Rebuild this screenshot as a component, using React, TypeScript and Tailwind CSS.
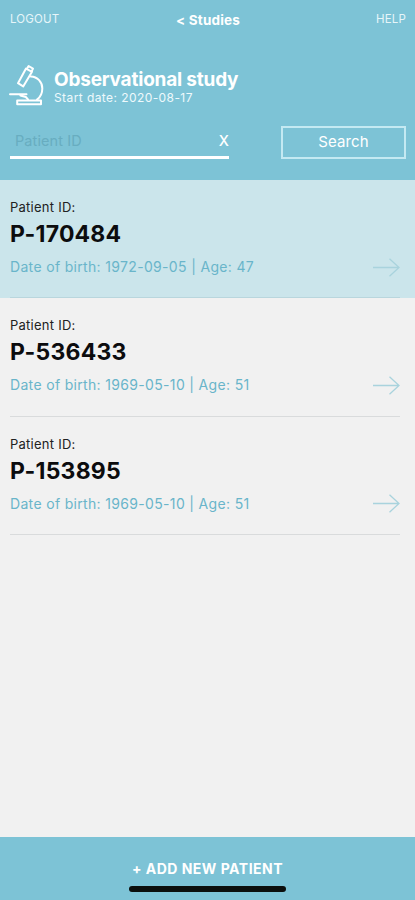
import { useState } from "react";
import clsx from "clsx";

type Patient = {
  id: string;
  birth: string;
  age: number;
};

const patients: Patient[] = [
  { id: "P-170484", birth: "1972-09-05", age: 47 },
  { id: "P-536433", birth: "1969-05-10", age: 51 },
  { id: "P-153895", birth: "1969-05-10", age: 51 },
];

function MicroscopeIcon() {
  return (
    <svg
      width="36"
      height="42"
      viewBox="0 0 36 42"
      fill="none"
      stroke="currentColor"
      strokeWidth="2"
      strokeLinecap="round"
      strokeLinejoin="round"
    >
      {/* tube */}
      <path d="M17 4.6 9 19.2 14.2 22.4 23 7.8Z" />
      <path d="M18.2 4.2 19.6 2 24 4.6 22.8 7" />
      {/* arm */}
      <path d="M21.8 12.6C28.5 12.8 33.3 18 33.3 24.4C33.3 29 31.4 33 28 35.6" />
      {/* stage */}
      <path d="M1 30.2H17.5M11.4 31.6 16.8 33 19 35.4" />
      {/* base */}
      <path d="M8.2 36.6H32V40.2H8.2Z" />
    </svg>
  );
}

function ArrowIcon() {
  return (
    <svg width="27" height="19" viewBox="0 0 27 19" fill="none" stroke="currentColor" strokeWidth="1.3">
      <path d="M0 9.5H26M16.5 0.8 26 9.5 16.5 18.2" />
    </svg>
  );
}

function PatientRow({
  patient,
  selected,
  onSelect,
}: {
  patient: Patient;
  selected: boolean;
  onSelect: () => void;
}) {
  return (
    <li onClick={onSelect} className={clsx("h-[118.3px] pl-2.5 pr-[15px]", selected && "bg-[#cbe5eb]")}>
      <div
        className={clsx(
          "flex h-full flex-col border-b pt-[18px]",
          selected ? "border-[#b9d6dd]" : "border-[#d9dbdc]"
        )}
      >
        <p className="text-[13px] leading-[18px] tracking-[0.25px] text-[#222]">Patient ID:</p>
        <p className="mt-1 text-[23px] font-bold leading-[28px] tracking-[0.2px] text-[#0c0c0e]">{patient.id}</p>
        <div className="mt-[9px] flex h-5 items-center justify-between">
          <span className="text-[14px] leading-5 tracking-[0.33px] text-[#69b5ca]">
            Date of birth: {patient.birth} | Age: {patient.age}
          </span>
          <span className="text-[#a9d3dd]">
            <ArrowIcon />
          </span>
        </div>
      </div>
    </li>
  );
}

export default function App() {
  const [query, setQuery] = useState("");
  const [selected, setSelected] = useState("P-170484");

  return (
    <div className="flex h-[900px] w-[415px] flex-col overflow-hidden bg-[#f1f1f1] font-['Inter',sans-serif]">
      <header className="h-[180px] shrink-0 bg-[#7dc3d6] text-white">
        <nav className="grid h-10 grid-cols-3 items-center pl-2.5 pr-[9px]">
          <button className="text-left text-[11.5px] tracking-[0.15px] text-[#e6f5f9]">LOGOUT</button>
          <button className="text-center text-[13.5px] font-bold tracking-[0.2px]">&lt; Studies</button>
          <button className="text-right text-[11.5px] tracking-[0.15px] text-[#e6f5f9]">HELP</button>
        </nav>

        <div className="mt-6 flex h-[42px] gap-[9px] pl-[9px]">
          <MicroscopeIcon />
          <div className="pt-[4px]">
            <h1 className="text-[19px] font-bold leading-[23px] tracking-[-0.2px]">Observational study</h1>
            <p className="text-[12px] leading-[14px] tracking-[0.42px] text-[#eef9fc]">Start date: 2020-08-17</p>
          </div>
        </div>

        <div className="mt-5 flex items-start justify-between pl-2.5 pr-[9px]">
          <div className="flex h-[33px] w-[219px] items-center border-b-[3px] border-white pl-[5px]">
            <input
              value={query}
              onChange={(e) => setQuery(e.target.value)}
              placeholder="Patient ID"
              className="w-0 flex-1 bg-transparent text-[14.5px] tracking-[0.1px] outline-none placeholder:text-[#68adc0]"
            />
            <button onClick={() => setQuery("")} className="text-[14.5px] font-medium">
              X
            </button>
          </div>
          <button className="h-[33px] w-[125px] border-2 border-[#c4e9f2] text-[15px] tracking-[0.1px]">
            Search
          </button>
        </div>
      </header>

      <ul className="flex-1">
        {patients.map((p) => (
          <PatientRow key={p.id} patient={p} selected={p.id === selected} onSelect={() => setSelected(p.id)} />
        ))}
      </ul>

      <footer className="flex h-[63px] shrink-0 flex-col items-center bg-[#7dc3d6] pt-[22px]">
        <button className="text-[14px] font-bold leading-5 tracking-[0.5px] text-white">+ ADD NEW PATIENT</button>
        {/* home indicator */}
        <div className="mt-[7px] h-[6px] w-[157px] rounded-full bg-[#0b0f0d]" />
      </footer>
    </div>
  );
}
